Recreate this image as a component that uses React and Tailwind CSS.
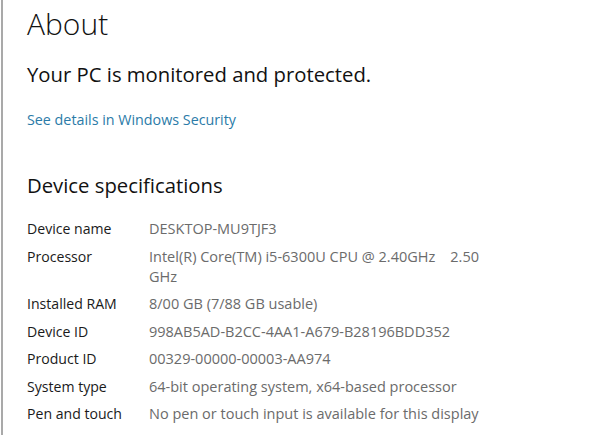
export default function App() {
  const rows = [
    ["Device name", "DESKTOP-MU9TJF3"],
    ["Processor", "Intel(R) Core(TM) i5-6300U CPU @ 2.40GHz\u00a0\u00a0\u00a0 2.50 GHz"],
    ["Installed RAM", "8/00 GB (7/88 GB usable)"],
    ["Device ID", "998AB5AD-B2CC-4AA1-A679-B28196BDD352"],
    ["Product ID", "00329-00000-00003-AA974"],
    ["System type", "64-bit operating system, x64-based processor"],
    ["Pen and touch", "No pen or touch input is available for this display"],
  ];
  return (
    <div className="w-[600px] h-[435px] bg-white overflow-hidden flex" style={{ fontFamily: '"Open Sans", "Noto Sans", sans-serif' }}>
      <div className="w-px" />
      <div className="w-[2px] bg-[#a9a9a9]" />
      <div className="flex-1 pl-[24px] flex flex-col">
        <h1 className="text-[30px] leading-[40px] mt-[4px] text-[#111] font-light">About</h1>
        <p className="text-[20.3px] leading-[28px] mt-[16px] text-[#111]">Your PC is monitored and protected.</p>
        <a className="text-[14.3px] leading-[20px] mt-[22px] text-[#2b7ba8]">See details in Windows Security</a>
        <h2 className="text-[20.3px] leading-[28px] mt-[41px] text-[#111]">Device specifications</h2>
        <div className="mt-[20px] flex flex-col gap-[7.5px] leading-[20px]">
          {rows.map(([k, v]) => (
            <div key={k} className="flex">
              <div className="w-[122px] shrink-0 text-[14.1px] text-[#1a1a1a]">{k}</div>
              <div className="w-[345px] text-[14.5px] text-[#6b6b6b]">{v}</div>
            </div>
          ))}
        </div>
      </div>
    </div>
  );
}
